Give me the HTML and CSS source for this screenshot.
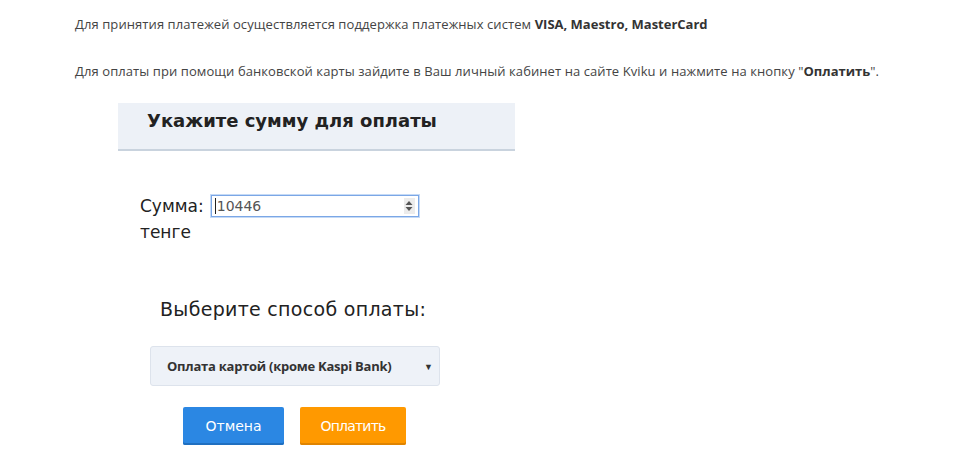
FILE: index.html
```html
<!DOCTYPE html>
<html lang="ru">
<head>
<meta charset="utf-8">
<link rel="stylesheet" href="styles.css">
</head>
<body>
<div class="page">
  <p class="info">Для принятия платежей осуществляется поддержка платежных систем <b>VISA, Maestro, MasterCard</b></p>
  <p class="info info2">Для оплаты при помощи банковской карты зайдите в Ваш личный кабинет на сайте Kviku и нажмите на кнопку "<b>Оплатить</b>".</p>
  <div class="form">
    <div class="head"><h2 class="title">Укажите сумму для оплаты</h2></div>
    <div class="sum">
      <label class="sum-label">Сумма:</label>
      <div class="num">
        <span class="num-val">10446</span>
        <span class="spin"><svg width="8" height="12" viewBox="0 0 8 12"><path d="M4 1 L7.5 5 H0.5 Z M0.5 7 H7.5 L4 11 Z" fill="#555"/></svg></span>
      </div>
    </div>
    <div class="currency">тенге</div>
    <div class="method-title">Выберите способ оплаты:</div>
    <div class="select">
      <span class="select-text">Оплата картой (кроме Kaspi Bank)</span>
      <span class="select-arrow">▼</span>
    </div>
    <div class="buttons">
      <button class="btn btn-cancel">Отмена</button>
      <button class="btn btn-pay">Оплатить</button>
    </div>
  </div>
</div>
</body>
</html>
```

FILE: styles.css
```css
html, body {
  margin: 0;
  padding: 0;
  background: #fff;
}
.page {
  padding: 15px 0 0 75px;
  font-family: "Open Sans", sans-serif;
  color: #444;
}
.info {
  margin: 0;
  font-size: 13px;
  line-height: 18px;
  letter-spacing: 0.08px;
}
.info2 {
  margin-top: 29px;
}
.info b {
  font-weight: 700;
  color: #333;
  letter-spacing: 0;
}
.form {
  margin-top: 23px;
  margin-left: 43px;
  width: 397px;
}
.head {
  background: #edf1f7;
  border-bottom: 2px solid #c9d3de;
  height: 48px;
  box-sizing: border-box;
  padding: 4px 0 0 29px;
}
.title {
  margin: 0;
  font-family: "DejaVu Sans", Verdana, sans-serif;
  font-weight: 700;
  font-size: 18px;
  line-height: 28px;
  color: #222;
}
.sum {
  display: flex;
  align-items: center;
  margin-top: 44px;
  margin-left: 22px;
  gap: 7px;
}
.sum-label, .currency {
  font-family: "DejaVu Sans", Verdana, sans-serif;
  font-size: 17px;
  color: #222;
}
.num {
  width: 208px;
  height: 22px;
  box-sizing: border-box;
  border: 1px solid #7ba7e6;
  box-shadow: 0 0 0 1px #c5daf6;
  display: flex;
  align-items: center;
  justify-content: space-between;
  padding: 0 3px 0 3px;
}
.num-val {
  font-family: "DejaVu Sans", Verdana, sans-serif;
  font-size: 14px;
  color: #555;
  border-left: 1px solid #222;
  padding-left: 1px;
  line-height: 16px;
}
.spin {
  width: 11px;
  height: 16px;
  background: #ececec;
  display: flex;
  align-items: center;
  justify-content: center;
}
.currency {
  margin-left: 22px;
  margin-top: 5px;
}
.method-title {
  margin-top: 56px;
  margin-left: 42px;
  font-family: "DejaVu Sans", Verdana, sans-serif;
  font-size: 19px;
  color: #222;
  letter-spacing: 0.3px;
}
.select {
  margin-top: 26px;
  margin-left: 32px;
  width: 290px;
  height: 40px;
  box-sizing: border-box;
  background: #eef2f8;
  border: 1px solid #dde3ec;
  border-radius: 3px;
  display: flex;
  align-items: center;
  justify-content: space-between;
  padding: 0 6px 0 16px;
}
.select-text {
  font-family: "Open Sans", sans-serif;
  font-weight: 700;
  font-size: 13px;
  letter-spacing: -0.25px;
  color: #333;
}
.select-arrow {
  font-size: 9px;
  color: #333;
}
.buttons {
  display: flex;
  gap: 16px;
  margin-top: 21px;
  margin-left: 65px;
}
.btn {
  border: none;
  height: 38px;
  font-family: "DejaVu Sans", Verdana, sans-serif;
  font-size: 14px;
  color: #fff;
  border-radius: 2px;
  padding: 0;
  cursor: pointer;
}
.btn-cancel {
  width: 101px;
  background: #2b87e3;
  box-shadow: inset 0 -2px 0 #1f6fc0;
}
.btn-pay {
  width: 106px;
  background: #ff9900;
  box-shadow: inset 0 -2px 0 #e08400;
  letter-spacing: -0.8px;
}
```
